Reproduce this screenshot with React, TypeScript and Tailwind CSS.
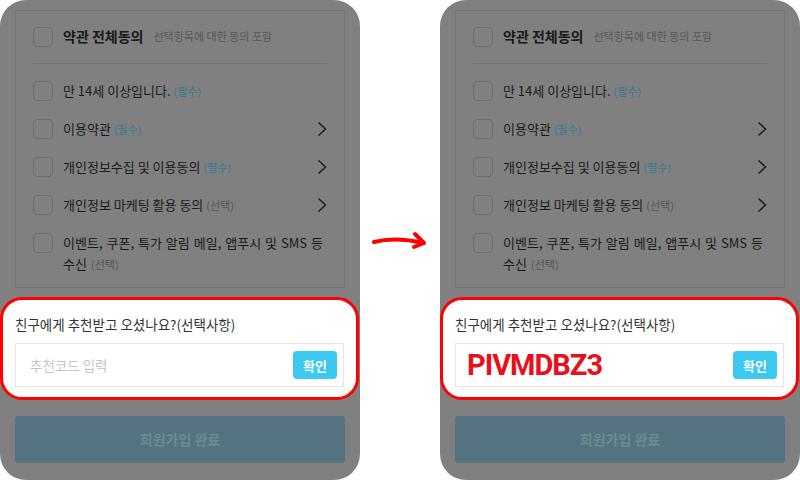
import React from 'react';

const font = { fontFamily: '"Noto Sans CJK KR", "Noto Sans", sans-serif' };

const Chevron = () => (
  <svg width="10" height="16" viewBox="0 0 10 16" className="shrink-0">
    <polyline points="1.5,1.5 8.5,8 1.5,14.5" fill="none" stroke="#1e1e1e" strokeWidth="1.5" />
  </svg>
);

const Box = () => (
  <span className="w-[20px] h-[20px] shrink-0 rounded-[4px] border border-[#6e6e6e]" />
);

interface RowProps {
  label: string;
  tag: string;
  required?: boolean;
  arrow?: boolean;
}

const Row: React.FC<RowProps> = ({ label, tag, required, arrow }) => (
  <div className="h-[38px] flex items-center gap-[10px]">
    <Box />
    <span className="flex-1 text-[13px] text-[#1a1a1a]">
      {label}{' '}
      <span className={`text-[11px] ${required ? 'text-[#367a95]' : 'text-[#555]'}`}>({tag})</span>
    </span>
    {arrow && <Chevron />}
  </div>
);

const Panel: React.FC<{ code?: string }> = ({ code }) => (
  <div className="w-[360px] h-[480px] shrink-0 rounded-[26px] bg-[#808080] flex flex-col overflow-hidden" style={font}>
    {/* terms */}
    <div className="mx-[15px] mt-[10px] h-[278px] border border-[#757575] px-[17px]">
      <div className="flex items-center gap-[10px] pt-[15px] pb-[16px]">
        <Box />
        <span className="text-[14px] font-bold text-[#1a1a1a]">약관 전체동의</span>
        <span className="text-[11px] text-[#585858]">선택항목에 대한 동의 포함</span>
      </div>
      <div className="border-t border-[#757575]" />
      <div className="pt-[8px]">
        <Row label="만 14세 이상입니다." tag="필수" required />
        <Row label="이용약관" tag="필수" required arrow />
        <Row label="개인정보수집 및 이용동의" tag="필수" required arrow />
        <Row label="개인정보 마케팅 활용 동의" tag="선택" arrow />
        <div className="flex items-start gap-[10px] pt-[9px]">
          <Box />
          <div className="flex-1 pr-[4px] text-[13px] leading-[21px] text-[#1a1a1a] -mt-[1px]">
            <div className="text-justify [text-align-last:justify]">이벤트, 쿠폰, 특가 알림 메일, 앱푸시 및 SMS 등</div>
            <div className="flex items-baseline gap-[4px]">
              <span>수신</span>
              <span className="text-[11px] text-[#555]">(선택)</span>
            </div>
          </div>
        </div>
      </div>
    </div>

    {/* referral (highlighted) */}
    <div className="mt-[9px] w-[359px] h-[103px] rounded-[22px] border-[3px] border-[#ff0000] bg-white px-[12px] pt-[14px]">
      <div className="text-[13.5px] text-[#333]">친구에게 추천받고 오셨나요?(선택사항)</div>
      <div className="mt-[9px] h-[44px] border border-[#e6e6e6] flex items-center pl-[14px] pr-[6px]">
        {code ? (
          <span
            className="flex-1 text-[29px] leading-none font-bold tracking-[-1px] text-[#e8101a] -ml-[3px]"
            style={{ fontFamily: 'Roboto, sans-serif' }}
          >
            {code}
          </span>
        ) : (
          <span className="flex-1 text-[13.5px] text-[#c4c4c4]">추천코드 입력</span>
        )}
        <button className="w-[44px] h-[28px] rounded-[4px] bg-[#3cc8f0] text-white text-[13px] font-bold">확인</button>
      </div>
    </div>

    {/* submit */}
    <div className="mx-[15px] mt-[16px] h-[47px] rounded-[3px] bg-[#557380] flex items-center justify-center text-[14px] font-bold text-[#6d8a96]">
      회원가입 완료
    </div>
  </div>
);

export default function App() {
  return (
    <div className="w-[800px] h-[480px] bg-white flex overflow-hidden">
      <Panel />
      <div className="w-[80px] flex items-center justify-center">
        <svg width="60" height="24" viewBox="0 0 60 24" className="mt-[2px]">
          <path d="M4 13 C20 9 36 10 53 14" fill="none" stroke="#ff0000" strokeWidth="4" strokeLinecap="round" />
          <path d="M45 5 L54 14 L44 18" fill="none" stroke="#ff0000" strokeWidth="4" strokeLinecap="round" strokeLinejoin="round" />
        </svg>
      </div>
      <Panel code="PIVMDBZ3" />
    </div>
  );
}
